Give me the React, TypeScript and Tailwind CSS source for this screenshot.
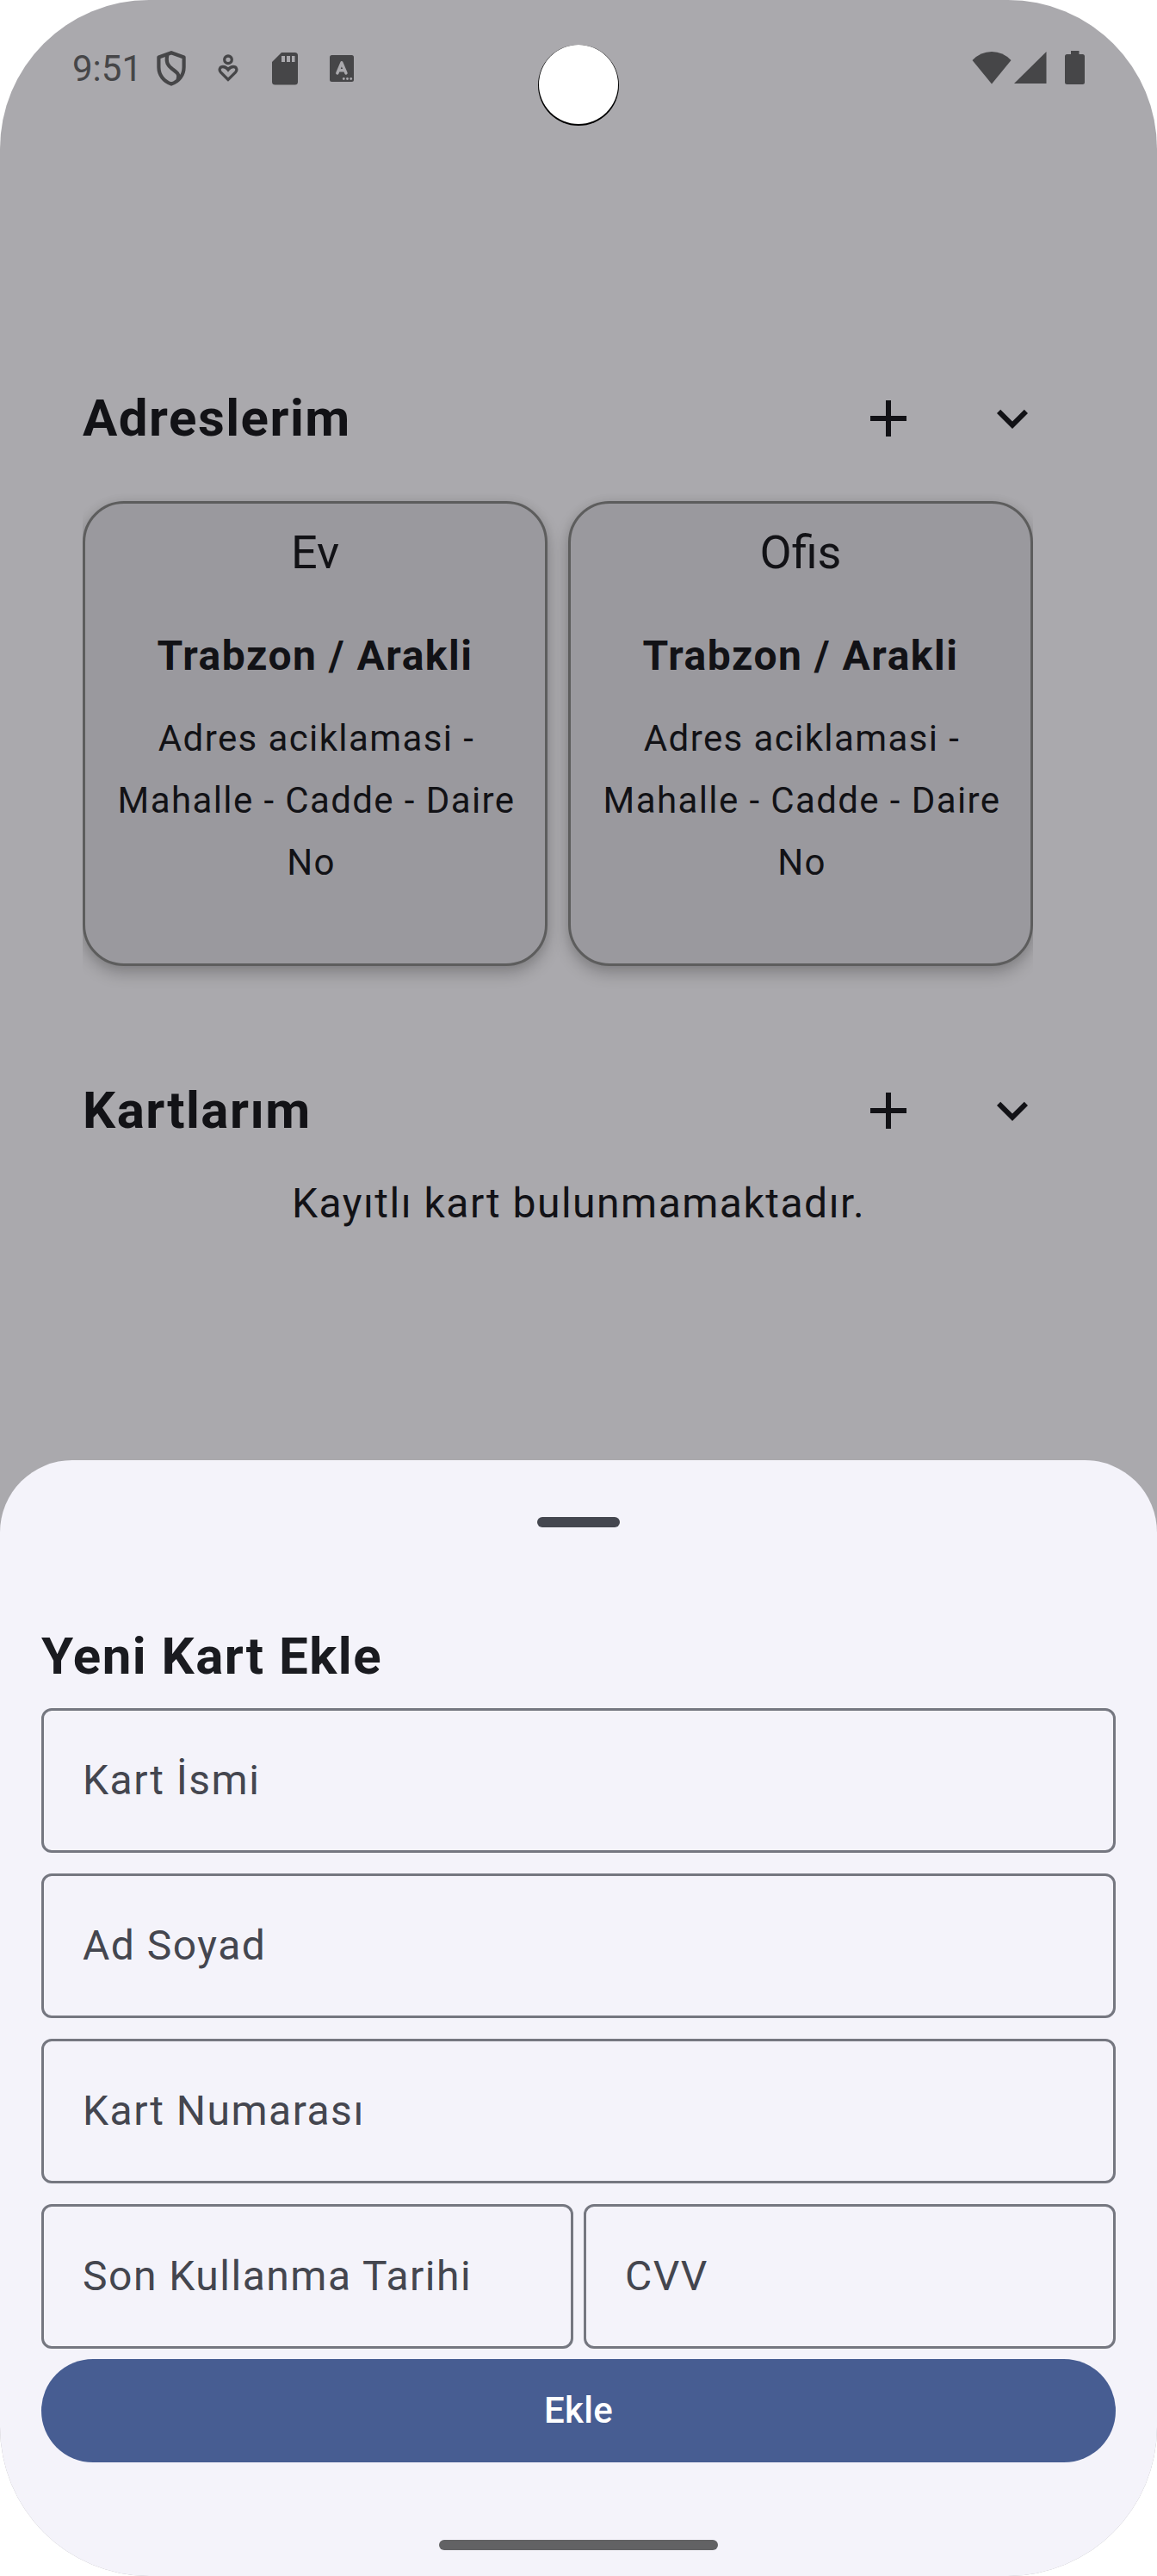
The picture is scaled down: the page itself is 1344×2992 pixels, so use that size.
import React from "react";

function StatusBar() {
  return (
    <div className="flex h-[156px] w-full pt-[50px] text-[#464648]">
      <span className="ml-[84px] w-[78px] text-[42px] leading-[60px] whitespace-nowrap">9:51</span>
      <svg className="ml-[20px] mt-[9px] h-[41px] w-[34px]" viewBox="0 0 34 41" fill="none" stroke="currentColor" strokeWidth="4.2" strokeLinejoin="round">
        <path d="M17 2.200 31.600 7.500V19C31.600 28 26 35.500 17 38.600C8 35.500 2.400 28 2.400 19V7.500Z" />
        <path d="M12.300 4.500C10.500 14 13 17 18 21C25 26 26.500 28 24.500 33.500" />
      </svg>
      <svg className="ml-[37px] mt-[12px] h-[34px] w-[24px]" viewBox="0 0 24 34" fill="none" stroke="currentColor" strokeWidth="3.3">
        <circle cx="12" cy="7.300" r="4.300" />
        <path d="M12 30.500 3.600 22.200C0.800 19.200 2.300 15.500 6 15.500C9 15.500 10.500 17 12 19C13.500 17 15 15.500 18 15.500C21.700 15.500 23.200 19.200 20.400 22.200Z" />
      </svg>
      <svg className="ml-[39px] mt-[11px] h-[38px] w-[30px]" viewBox="0 0 30 38" fill="currentColor">
        <path d="M11 0H26.500Q30 0 30 3.500V34Q30 37.500 26.500 37.500H3.500Q0 37.500 0 34V11Z" />
        <path d="M11 4H15V11H11ZM17 4H21V11H17ZM23 4H26.500V11H23Z" fill="#aaa9ad" />
      </svg>
      <svg className="ml-[37px] mt-[14px] h-[31px] w-[28px]" viewBox="0 0 28 31">
        <rect width="28" height="31" rx="2.500" fill="currentColor" />
        <path d="M8.800 21 13.900 8.800 19 21M10.500 17.800H17.300" fill="none" stroke="#aaa9ad" strokeWidth="3.4" strokeLinecap="round" strokeLinejoin="round" />
        <g fill="#aaa9ad">
          <circle cx="16.300" cy="27.500" r="1.400" />
          <circle cx="20.500" cy="27.500" r="1.400" />
          <circle cx="24.700" cy="27.500" r="1.400" />
        </g>
      </svg>
      <svg className="ml-auto mt-[9px] h-[39px] w-[46px]" viewBox="0 0 46 39" fill="currentColor">
        <path d="M0.500 11Q10 1 23 1T45.500 11L23 38.500Z" />
      </svg>
      <svg className="ml-[3px] mt-[9px] h-[39px] w-[38px]" viewBox="0 0 38 39" fill="currentColor">
        <path d="M0 38H37.500V1Z" />
      </svg>
      <svg className="mr-[84px] ml-[21px] mt-[9px] h-[39px] w-[23px]" viewBox="0 0 23 39" fill="currentColor">
        <path d="M7 0H16.500V4H20.500Q23 4 23 6.500V36.500Q23 39 20.500 39H2.500Q0 39 0 36.500V6.500Q0 4 2.500 4H7Z" />
      </svg>
    </div>
  );
}

function SectionHeader({ title }: { title: string }) {
  return (
    <div className="flex h-[144px] items-center pl-24 pr-24">
      <h2 className="flex-1 text-[60px] leading-[72px] font-bold tracking-[1.5px]">{title}</h2>
      <button className="flex size-36 items-center justify-center">
        <svg className="size-[72px]" viewBox="0 0 24 24" fill="currentColor">
          <path d="M19 13h-6v6h-2v-6H5v-2h6V5h2v6h6v2z" />
        </svg>
      </button>
      <button className="flex size-36 items-center justify-center">
        <svg className="size-[72px]" viewBox="0 0 24 24" fill="currentColor">
          <path d="M7.410 8.590 12 13.170l4.590-4.580L18 10l-6 6-6-6z" />
        </svg>
      </button>
    </div>
  );
}

function AddressCard({ name, last }: { name: string; last: string }) {
  return (
    <article className="flex size-[540px] shrink-0 flex-col items-center rounded-[48px] border-[3px] border-[#5d5d5d] bg-[#9a999e] text-center shadow-[0_9px_18px_rgba(0,0,0,0.22),0_0_12px_rgba(0,0,0,0.07)]">
      <h3 className="mt-[21px] text-[54px] leading-[72px]">{name}</h3>
      <p className="mt-[48px] text-[48px] leading-[72px] font-bold tracking-[1.5px]">Trabzon / Arakli</p>
      <p className="mt-[24px] pl-[3px] text-[42px] leading-[72px] tracking-[1.4px] whitespace-pre">
        {"Adres aciklamasi -\nMahalle - Cadde - Daire\n" + last}
      </p>
    </article>
  );
}

function Field({ label }: { label: string }) {
  return (
    <div className="flex h-[168px] flex-1 items-center rounded-[12px] border-[3px] border-[#757780] pl-[45px] text-[48px] leading-[72px] tracking-[1.5px] text-[#44464f]">
      {label}
    </div>
  );
}

export default function App() {
  return (
    <div className="w-[1344px] bg-white">
      <main className="relative flex h-[2992px] w-[1344px] flex-col overflow-hidden rounded-[173px] bg-[#aaa9ad] font-['Roboto',sans-serif] text-[#121216]">
        <StatusBar />
        <div className="absolute top-[52px] left-[625px] size-[94px] rounded-full bg-black">
          <div className="ml-px h-[92px] w-[92px] rounded-full bg-white" />
        </div>

        <section className="mt-[258px]">
          <SectionHeader title="Adreslerim" />
          <div className="mx-24 -mt-2 flex w-[1104px] gap-6 overflow-hidden pt-[32px] pb-10">
            <AddressCard name="Ev" last={"No "} />
            <AddressCard name="Ofis" last="No" />
          </div>
        </section>

        <section className="mt-[56px]">
          <SectionHeader title="Kartlarım" />
          <p className="text-center text-[48px] leading-[72px] tracking-[1.5px]">Kayıtlı kart bulunmamaktadır.</p>
        </section>

        <section className="mt-auto flex h-[1296px] flex-col items-center rounded-t-[84px] bg-[#f4f3fa] px-12">
          <div className="mt-[66px] h-3 w-24 rounded-full bg-[#44464f]" />
          <h2 className="mt-[114px] w-full text-[60px] leading-[72px] font-bold tracking-[1.5px] text-[#1a1b20]">Yeni Kart Ekle</h2>
          <div className="mt-[24px] flex w-full flex-col gap-6">
            <div className="flex"><Field label="Kart İsmi" /></div>
            <div className="flex"><Field label="Ad Soyad" /></div>
            <div className="flex"><Field label="Kart Numarası" /></div>
            <div className="flex gap-3">
              <Field label="Son Kullanma Tarihi" />
              <Field label="CVV" />
            </div>
          </div>
          <button className="mt-3 h-[120px] w-full rounded-full bg-[#475d92] text-[42px] leading-[60px] font-medium tracking-[0.3px] text-white">Ekle</button>
          <div className="mt-[90px] h-3 w-[324px] rounded-full bg-[#626264]" />
        </section>
      </main>
    </div>
  );
}
